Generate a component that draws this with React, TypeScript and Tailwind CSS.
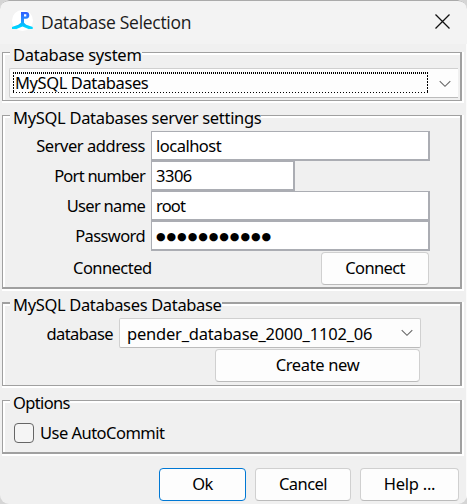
import type { ReactNode } from "react";

const labelFont = "whitespace-pre font-['Noto_Sans',sans-serif] text-[16.5px] leading-5 text-black";

function Text({ children, className = "" }: { children: ReactNode; className?: string }) {
  return <span className={`block ${labelFont} ${className}`}>{children}</span>;
}

function Group({
  legend,
  legendClass,
  outer,
  edge,
  children,
}: {
  legend: string;
  legendClass: string;
  outer: string;
  edge: string;
  children: ReactNode;
}) {
  return (
    <section className={`relative ml-[2px] w-[462px] border-r-2 border-b-2 border-white ${outer}`}>
      <div className={`h-full border-l border-r-2 border-[#a0a0a0] ${edge}`}>
        <div className="h-full border-t-2 border-l-2 border-white">{children}</div>
      </div>
      <div className="absolute top-[-7px] left-[8px] h-5 bg-[#f0f0f0] pl-[3px]">
        <Text className={legendClass}>{legend}</Text>
      </div>
    </section>
  );
}

function Field({ label, labelClass, width, children }: { label: string; labelClass: string; width: string; children: ReactNode }) {
  return (
    <div className="flex h-[30px]">
      <div className="flex w-[146px] justify-end pt-[5px] pr-[6px]">
        <Text className={labelClass}>{label}</Text>
      </div>
      <div className={`border-t border-r-2 border-b-2 border-l border-[#abadb3] bg-white pt-1 pl-1 ${width}`}>
        {children}
      </div>
    </div>
  );
}

function Button({ className, textClass = "", children }: { className: string; textClass?: string; children: ReactNode }) {
  return (
    <button className={`flex h-[33px] justify-center rounded-[4px] border bg-[#fdfdfd] pt-[5px] ${className}`}>
      <Text className={textClass}>{children}</Text>
    </button>
  );
}

function Chevron({ className = "" }: { className?: string }) {
  return (
    <svg className={className} width="12" height="8" viewBox="0 0 12 8" fill="none" stroke="#666" strokeWidth="1.1">
      <path d="M.7 1.2 6 6.3l5.3-5.1" />
    </svg>
  );
}

export default function App() {
  return (
    <div className="h-[504px] w-[467px] overflow-hidden bg-[#d5d5d5]">
      <main className="relative h-[504px] w-[467px] overflow-hidden rounded-[9px] bg-[#f0f0f0]">
        <header className="flex h-[44px] items-start rounded-t-[9px] border-t border-[#aaa] bg-[#f3f3f3]">
          <svg className="mt-[9px] ml-[11px]" width="23" height="23" viewBox="0 0 23 23">
            <defs>
              <linearGradient id="logo" x1="0" y1="0" x2="0" y2="1">
                <stop offset="0" stopColor="#2f5bff" />
                <stop offset=".5" stopColor="#2492ff" />
                <stop offset=".8" stopColor="#00c8ff" />
                <stop offset="1" stopColor="#00dcff" />
              </linearGradient>
            </defs>
            <circle cx="11.5" cy="10.5" r="10.500" fill="#fff" />
            <path
              fill="url(#logo)"
              fillRule="evenodd"
              d="M10 2h5.200c2.100 0 3.100 1.200 3.100 3.300S17.300 8.700 15 8.700h-2v4l2.200 2 6.500 2.300v2h-4.200L11.500 16.500 5.500 19H1v-2l6.300-2.300L10 12.700ZM13 4.200v2.300h2.300V4.200Z"
            />
          </svg>
          <span className="mt-[9px] ml-[7px] font-['Open_Sans',sans-serif] text-[17.5px] leading-6 tracking-[-0.3px] whitespace-pre text-[#1b1b1b]">
            Database Selection
          </span>
          <svg className="mt-[12px] mr-[16px] ml-auto" width="17" height="17" viewBox="0 0 17 17" stroke="#111" strokeWidth="1.3">
            <path d="m1.5 1.5 14 14m0-14-14 14" />
          </svg>
        </header>
        <div className="h-[460px] border-r border-[#fcfcfc] pt-2">
          <Group legend="Database system" legendClass="tracking-[-0.25px]" outer="h-[51px]" edge="border-t border-b">
            <div className="mt-[13px] ml-1 flex h-[30px] w-[449px] rounded-l-[2px] border-t border-b border-l border-[#d0d0d0] border-b-[#bbb] bg-[#fdfdfd]">
              <div className="mt-[3px] ml-[3px] h-[21px] w-[415px] bg-[repeating-linear-gradient(90deg,#000_0_1px,transparent_1px_2px),repeating-linear-gradient(90deg,#000_0_1px,transparent_1px_3px),repeating-linear-gradient(#000_0_2px,transparent_2px_3px),repeating-linear-gradient(#000_0_2px,transparent_2px_3px)] bg-[size:100%_2px,100%_1px,1px_100%,1px_100%] bg-[position:0_0,0_100%,0_0,100%_0] bg-no-repeat pt-px pl-[2px]">
                <Text className="tracking-[-0.4px]">MySQL Databases</Text>
              </div>
              <Chevron className="mt-[11px] ml-[11px]" />
            </div>
          </Group>

          <Group legend="MySQL Databases server settings" legendClass="tracking-[-0.31px]" outer="mt-3 h-[176px]" edge="border-t border-b-2">
            <div className="pt-[13px]">
              <Field label="Server address" labelClass="tracking-[-0.45px]" width="w-[279px]">
                <Text className="tracking-[-0.5px]">localhost</Text>
              </Field>
              <Field label="Port number" labelClass="tracking-[-0.75px]" width="w-[144px]">
                <Text className="tracking-[-0.5px]">3306</Text>
              </Field>
              <Field label="User name" labelClass="tracking-[-0.7px]" width="w-[279px]">
                <Text className="tracking-[-0.8px]">root</Text>
              </Field>
              <Field label="Password" labelClass="tracking-[-0.6px]" width="w-[279px]">
                <span className="block pt-[1px] font-['DejaVu_Sans',sans-serif] text-[11px] leading-5 tracking-[0.95px]">●●●●●●●●●●●</span>
              </Field>
              <div className="flex pt-px">
                <div className="w-[248px] pt-[6px] pl-[68px]">
                  <Text className="tracking-[-0.55px]">Connected</Text>
                </div>
                <Button className="ml-[68px] w-[108px] border-[#d0d0d0] border-b-[#bbb]" textClass="tracking-[-0.65px]">
                  Connect
                </Button>
              </div>
            </div>
          </Group>

          <Group legend="MySQL Databases Database" legendClass="tracking-[-0.34px]" outer="mt-[11px] h-[86px]" edge="border-t-2 border-b">
            <div className="pt-3">
              <div className="flex">
                <div className="flex w-[114px] justify-end pt-[6px] pr-[6px]">
                  <Text className="tracking-[-0.6px]">database</Text>
                </div>
                <div className="flex h-[30px] w-[302px] rounded-[2px] border border-[#d0d0d0] border-b-[#bbb] bg-[#fdfdfd] pt-[5px] pl-[7px]">
                  <Text className="tracking-[-0.2px]">pender_database_2000_1102_06</Text>
                  <Chevron className="mt-[5px] mr-[7px] ml-auto" />
                </div>
              </div>
              <Button className="mt-px ml-[210px] w-[205px] border-[#d0d0d0] border-b-[#bbb]" textClass="tracking-[-0.35px]">
                Create new
              </Button>
            </div>
          </Group>

          <Group legend="Options" legendClass="tracking-[-0.65px]" outer="mt-3 h-[56px]" edge="border-t border-b-2">
            <label className="flex pt-[20px] pl-[9px]">
              <span className="size-5 rounded-[4px] border border-[#666] bg-[#f5f5f5]" />
              <Text className="ml-[6px] tracking-[-0.52px]">Use AutoCommit</Text>
            </label>
          </Group>

          <footer className="mt-3 ml-[159px] flex">
            <Button className="w-[87px] border-[#0078d4]" textClass="tracking-[-0.6px]">Ok</Button>
            <Button className="ml-[9px] w-[96px] border-[#d0d0d0] border-b-[#bbb]" textClass="tracking-[-0.55px]">Cancel</Button>
            <Button className="ml-[9px] w-[99px] border-[#d0d0d0] border-b-[#bbb]" textClass="tracking-[-0.25px]">Help ...</Button>
          </footer>
        </div>
      </main>
    </div>
  );
}
